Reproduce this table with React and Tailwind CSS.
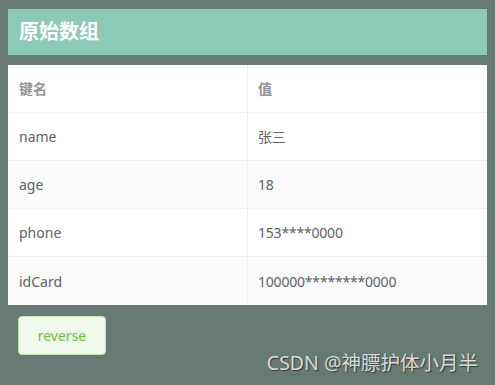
const rows = [
  { key: "name", value: "张三" },
  { key: "age", value: "18" },
  { key: "phone", value: "153****0000" },
  { key: "idCard", value: "100000********0000" },
];

export default function App() {
  return (
    <div
      className="relative h-[385px] w-[495px] overflow-hidden bg-[#677a74] px-2 pt-[9px]"
      style={{ fontFamily: '"Noto Sans", "Noto Sans CJK SC", sans-serif' }}
    >
      <div className="flex h-[46px] items-center bg-[#8cc9b7] px-[11px]">
        <h1 className="text-[20px] font-bold leading-none text-white">原始数组</h1>
      </div>

      <div className="mt-[10px] bg-white text-[14px] text-[#606266]">
        <div className="grid h-[48px] grid-cols-[240px_1fr] border-b border-[#ebeef5]">
          <div className="flex items-center border-r border-[#ebeef5] pl-[11px] font-bold text-[#909399]">
            键名
          </div>
          <div className="flex items-center pl-[10px] font-bold text-[#909399]">值</div>
        </div>
        {rows.map((row, i) => (
          <div
            key={row.key}
            className={`grid h-[48px] grid-cols-[240px_1fr] ${
              i < rows.length - 1 ? "border-b border-[#ebeef5]" : ""
            } ${i % 2 === 1 ? "bg-[#fafafa]" : "bg-white"}`}
          >
            <div className="flex items-center border-r border-[#ebeef5] pl-[11px]">{row.key}</div>
            <div className="flex items-center pl-[10px] tracking-[-0.2px]">{row.value}</div>
          </div>
        ))}
      </div>

      <div className="mt-[11px] pl-[10px]">
        <button className="h-[39px] w-[88px] rounded-[4px] border border-[#c2e7b0] bg-[#f0f9eb] text-[14px] text-[#67c23a]">
          reverse
        </button>
      </div>

      <div className="absolute right-[17px] top-[353px] text-[19.5px] leading-none text-[#d9d9d9] [text-shadow:1px_1px_1px_#2f3a36]">
        CSDN @神膘护体小月半
      </div>
    </div>
  );
}
